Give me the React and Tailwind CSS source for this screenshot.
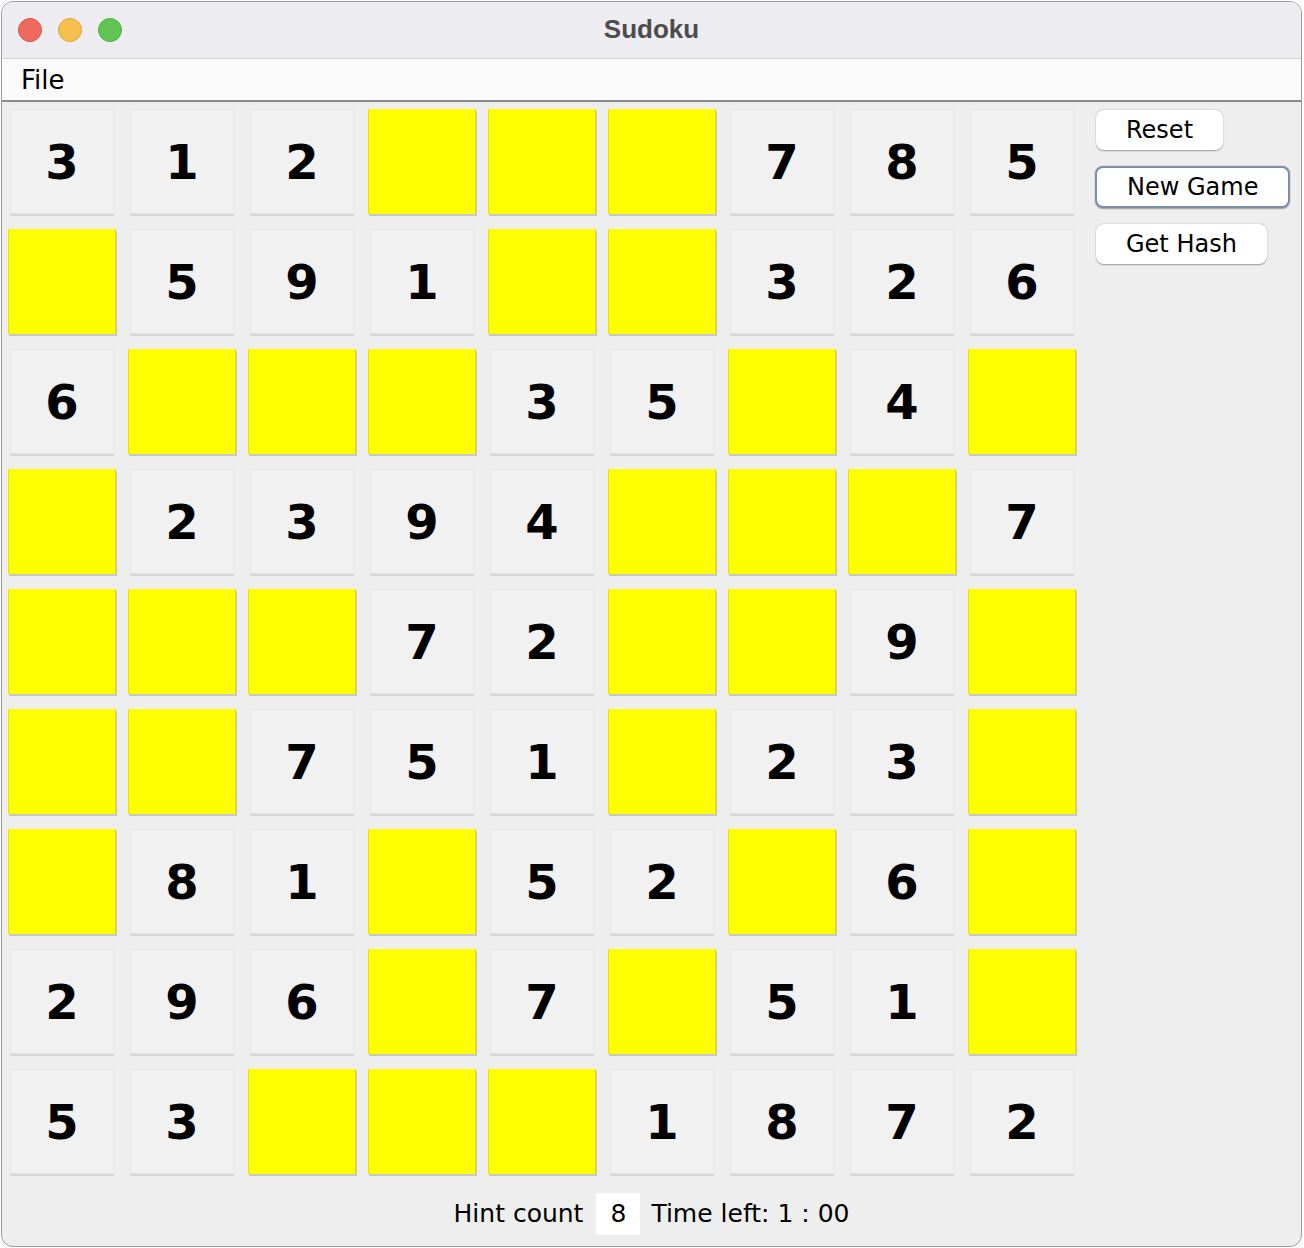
import React from 'react';

const BOARD = [
  '312000785',
  '059100326',
  '600035040',
  '023940007',
  '000720090',
  '007510230',
  '081052060',
  '296070510',
  '530001872',
];

const Cell = ({ value }) => {
  if (value === '0') {
    return (
      <div className="w-[108px] h-[105px] bg-[#ffff00] border-x border-[#e4e400] shadow-[1px_2px_0_#c8c8c8]" />
    );
  }
  return (
    <div className="w-[104px] h-[105px] bg-[#f1f1f1] border border-[#e6e6e6] shadow-[0_2px_0_#d6d6d6] flex items-center justify-center">
      <span className="text-[48px] font-bold text-black leading-none">{value}</span>
    </div>
  );
};

const MacButton = ({ children, focused }) => (
  <button
    className={`h-[40px] px-[30px] rounded-[8px] bg-white text-[24px] text-black leading-none shadow-[0_0.5px_1.5px_rgba(0,0,0,0.35)] ${
      focused ? 'h-[42px] px-[30px] border-2 border-[#7d8ea8]' : ''
    }`}
  >
    {children}
  </button>
);

export default function App() {
  return (
    <div className="w-[1304px] h-[1248px] bg-white" style={{ fontFamily: '"DejaVu Sans", sans-serif' }}>
      <div className="ml-[1px] pt-[1px] w-[1302px]">
        <div className="w-[1301px] h-[1246px] rounded-[12px] border border-[#9c9c9c] overflow-hidden flex flex-col bg-[#eeeeee]">
          {/* title bar */}
          <div className="h-[57px] shrink-0 bg-[#ececf1] border-b border-[#d2d2d6] grid grid-cols-[1fr_auto_1fr] items-center">
            <div className="flex items-center gap-[16px] pl-[16px] -mt-[1px]">
              <span className="w-[24px] h-[24px] rounded-full bg-[#ee6a5f] border border-[#d9574c]" />
              <span className="w-[24px] h-[24px] rounded-full bg-[#f5bf4f] border border-[#dba53b]" />
              <span className="w-[24px] h-[24px] rounded-full bg-[#61c554] border border-[#4ead43]" />
            </div>
            <div
              className="text-[26px] font-bold text-[#4c4c4c] -mt-[1px]"
              style={{ fontFamily: '"Liberation Sans", Arial, sans-serif' }}
            >
              Sudoku
            </div>
            <div />
          </div>

          {/* menu bar */}
          <div className="h-[43px] shrink-0 bg-[#fafafa] border-b-2 border-[#8a8a8a] flex items-center pl-[19px] pt-[1px]">
            <span className="text-[26px] text-black leading-none">File</span>
          </div>

          {/* content */}
          <div className="flex">
            <div className="grid grid-cols-[repeat(9,120px)] gap-y-[15px] pt-[7px]">
              {BOARD.map((row, r) =>
                row.split('').map((v, c) => (
                  <div key={`${r}-${c}`} className="flex justify-center">
                    <Cell value={v} />
                  </div>
                ))
              )}
            </div>
            <div className="ml-[14px] pt-[8px] flex flex-col items-start gap-[17px]">
              <MacButton>Reset</MacButton>
              <div className="-ml-[1px] -my-[1px]">
                <MacButton focused>New Game</MacButton>
              </div>
              <MacButton>Get Hash</MacButton>
            </div>
          </div>

          {/* status bar */}
          <div className="pt-[19px] flex justify-center items-center text-[25px] text-black">
            <span>Hint count</span>
            <div className="ml-[13px] w-[44px] h-[42px] bg-white flex items-center justify-center">8</div>
            <span className="ml-[11px]">Time left: 1 : 00</span>
          </div>
        </div>
      </div>
    </div>
  );
}
